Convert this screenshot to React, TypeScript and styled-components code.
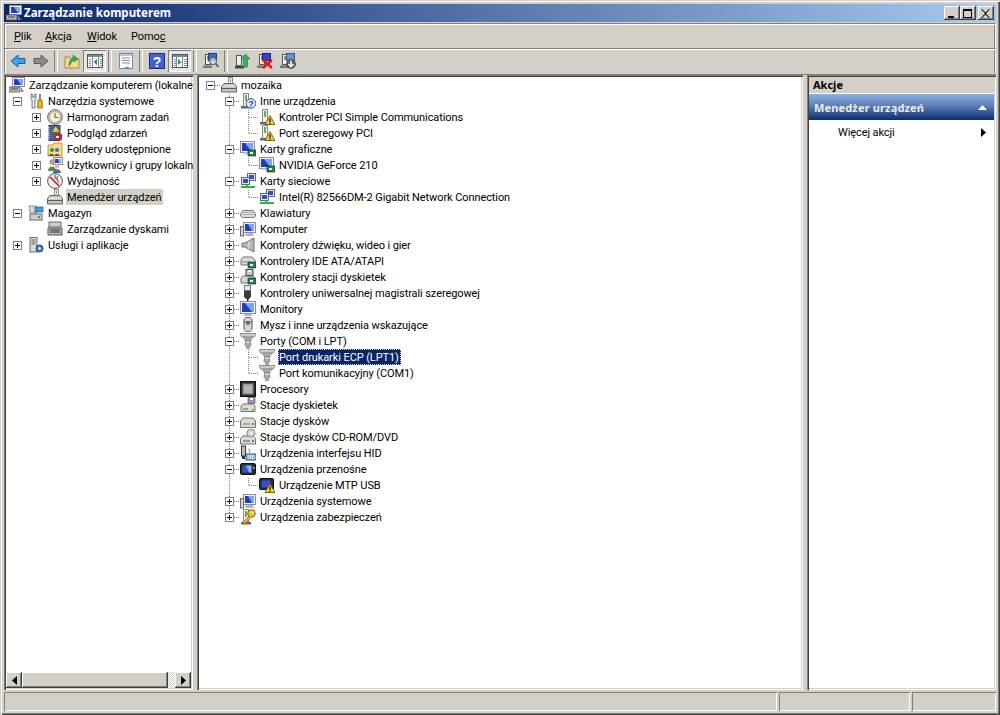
import React from "react";
import styled, { createGlobalStyle } from "styled-components";

const Global = createGlobalStyle`
  html, body { margin: 0; padding: 0; background: #d4d0c8; }
  * { box-sizing: border-box; }
`;

const FONT = `Roboto, "Liberation Sans", sans-serif`;
const BOLD = `"Noto Sans", "Liberation Sans", sans-serif`;
const FACE = "#d4d0c8";
const DITHER = `repeating-conic-gradient(#fff 0 25%, ${FACE} 0 50%) 0 0 / 2px 2px`;

const Window = styled.div`
  width: 1000px; height: 715px; overflow: hidden; background: ${FACE};
  padding: 4px 4px 4px 4px; display: flex; flex-direction: column;
  font: 11px/16px ${FONT}; letter-spacing: -0.09px; color: #000;
  box-shadow: inset 1px 1px 0 ${FACE}, inset 2px 2px 0 #fff, inset -1px -1px 0 #404040, inset -2px -2px 0 #808080;
`;
const TitleBar = styled.div`
  height: 18px; flex: none; display: flex; align-items: center; padding: 0 2px 0 2px;
  background: linear-gradient(to right, #0a246a, #a6caf0);
`;
const TitleText = styled.span`
  flex: 1; margin-left: 2px; color: #fff; font: bold 11.5px/16px ${BOLD}; letter-spacing: 0;
`;
const CaptionButton = styled.div<{ $gap?: number }>`
  width: 16px; height: 14px; margin-left: ${p => p.$gap ?? 0}px; background: ${FACE}; display: flex;
  align-items: center; justify-content: center;
  box-shadow: inset -1px -1px 0 #404040, inset 1px 1px 0 #fff, inset -2px -2px 0 #808080;
`;
const Bar = styled.div`
  height: 25px; flex: none; display: flex; align-items: center; margin-top: 1px;
  border-top: 1px solid #808080; border-left: 1px solid #808080; border-right: 1px solid #fff;
  box-shadow: inset 1px 1px 0 #fff, inset -1px 0 0 #808080;
`;
const MenuBar = styled(Bar)`
  padding-left: 2px; margin-bottom: -1px;
`;
const ToolBar = styled(Bar)`
  padding-left: 1px; margin-bottom: 0;
`;
const MenuItem = styled.span<{ $w: number }>`
  padding: 1px 0 0 7px; white-space: nowrap; width: ${p => p.$w}px;
`;
const ToolButton = styled.div<{ $on?: boolean }>`
  width: 23px; height: 22px; display: flex; align-items: center; justify-content: center; flex: none;
  ${p => p.$on ? `background: ${DITHER}; box-shadow: inset 1px 1px 0 #808080, inset -1px -1px 0 #fff;` : ""}
`;
const ToolSep = styled.div`
  width: 8px; height: 22px; flex: none; display: flex; justify-content: center;
  &::before { content: ""; width: 2px; height: 100%; border-left: 1px solid #808080; border-right: 1px solid #fff; }
`;
const Main = styled.div`
  flex: 1; min-height: 0; display: flex; margin-top: 1px; padding-bottom: 2px;
  border-top: 1px solid #808080;
`;
const Pane = styled.div<{ $w?: number }>`
  ${p => p.$w ? `width: ${p.$w}px; flex: none;` : "flex: 1; min-width: 0;"}
  background: #fff; display: flex; flex-direction: column; overflow: hidden;
  box-shadow: inset 1px 1px 0 #808080, inset 2px 2px 0 #404040, inset -1px -1px 0 #fff, inset -2px -2px 0 ${FACE};
`;
const Splitter = styled.div`
  width: 4px; flex: none;
`;
const Tree = styled.div<{ $left: number }>`
  flex: 1; min-height: 0; padding: 2px 2px 0 ${p => p.$left}px; overflow: hidden;
`;
const Row = styled.div`
  height: 16px; display: flex; align-items: flex-start; white-space: nowrap;
`;
type GuideKind = "none" | "v" | "t" | "l" | "h";
const dotsV = `repeating-linear-gradient(to bottom, #808080 0 1px, transparent 1px 2px)`;
const dotsH = `repeating-linear-gradient(to right, #808080 0 1px, transparent 1px 2px)`;
const guideBg = (k: GuideKind) => {
  switch (k) {
    case "v": return `background: ${dotsV} 8px 1px / 1px 100% no-repeat;`;
    case "t": return `background: ${dotsV} 8px 1px / 1px 100% no-repeat, ${dotsH} 9px 8px / 10px 1px no-repeat;`;
    case "l": return `background: ${dotsV} 8px 1px / 1px 8px no-repeat, ${dotsH} 9px 8px / 10px 1px no-repeat;`;
    case "h": return `background: ${dotsH} 9px 8px / 10px 1px no-repeat;`;
    default: return "";
  }
};
const Guide = styled.div<{ $k: GuideKind }>`
  width: 19px; height: 16px; flex: none; padding: 4px 0 0 4px; ${p => guideBg(p.$k)}
`;
const Expander = styled.div`
  width: 9px; height: 9px; background: #fff; border: 1px solid #808080; display: flex;
  align-items: center; justify-content: center;
`;
const IconSlot = styled.div`
  width: 16px; height: 16px; flex: none;
  & > svg { display: block; }
`;
const Label = styled.span<{ $sel?: "active" | "inactive" }>`
  margin-left: 3px; padding: 0 2px 0 1px; height: 16px; line-height: 18px;
  ${p => p.$sel === "active" ? `background: #0a246a; color: #fff; outline: 1px dotted #d4d0c8; outline-offset: -1px;` : ""}
  ${p => p.$sel === "inactive" ? `background: ${FACE};` : ""}
`;
const HScroll = styled.div`
  height: 16px; flex: none; display: flex; margin: 0 2px 2px 2px;
`;
const ScrollBtn = styled.div`
  width: 16px; height: 16px; flex: none; background: ${FACE}; display: flex; align-items: center; justify-content: center;
  box-shadow: inset -1px -1px 0 #404040, inset 1px 1px 0 #fff, inset -2px -2px 0 #808080;
`;
const ScrollThumb = styled(ScrollBtn)` width: 146px; `;
const ScrollTrack = styled.div` flex: 1; background: ${DITHER}; `;
const ActionsHead = styled.div`
  height: 16px; margin: 2px 2px 0 2px; padding: 0 0 0 4px; background: ${FACE}; font: bold 11px/16px ${BOLD}; letter-spacing: 0;
`;
const ActionsGroup = styled.div`
  height: 26px; margin: 1px 2px 0 2px; padding: 1px 7px 0 5px; display: flex; align-items: center;
  justify-content: space-between; color: #e8eef8; font: bold 11px/16px ${BOLD}; letter-spacing: 0.15px;
  background: linear-gradient(to bottom, #8bb0e2, #5f7eb4 45%, #0c2a74);
`;
const ActionItem = styled.div`
  height: 16px; margin: 4px 2px 0 2px; padding: 1px 8px 0 29px; display: flex; align-items: center; justify-content: space-between;
`;
const StatusBar = styled.div`
  height: 19px; flex: none; display: flex; gap: 2px;
`;
const StatusCell = styled.div<{ $w?: number }>`
  ${p => p.$w ? `width: ${p.$w}px; flex: none;` : "flex: 1;"}
  box-shadow: inset 1px 1px 0 #808080, inset -1px -1px 0 #fff;
`;

/* ---------- icons ---------- */
const S: React.FC<{ c: React.ReactNode }> = ({ c }) => <svg width="16" height="16" viewBox="0 0 16 16">{c}</svg>;
const tower = (
  <g>
    <rect x="3.5" y="0.5" width="5" height="13" fill="#f0f0e8" stroke="#8c8c84" />
    <rect x="5" y="2" width="2" height="6" fill="#6aa56a" />
    <path d="M1 13h10v2.5H1z" fill="#6b6b64" />
  </g>
);
const warn = (
  <g>
    <path d="M11 6.5 16 15.5H6z" fill="#ffd21e" stroke="#5c4a00" strokeWidth="0.8" />
    <rect x="10.4" y="9.5" width="1.2" height="3.4" fill="#000" /><rect x="10.4" y="13.6" width="1.2" height="1.2" fill="#000" />
  </g>
);
const mon = (x = 1, y = 1, w = 12, h = 9) => (
  <g>
    <rect x={x + .5} y={y + .5} width={w} height={h} fill="#eef0f2" stroke="#8a8f96" />
    <rect x={x + 2} y={y + 2} width={w - 3} height={h - 3} fill="#1c3fc4" />
    <path d={`M${x + 5} ${y + 2}h${w - 6}v${h - 3}h-2z`} fill="#7ea6ee" />
  </g>
);
const card = <g><rect x="8" y="9" width="8" height="6" fill="#2f7d4f" stroke="#123" strokeWidth=".6" /><rect x="10" y="11" width="3" height="2" fill="#cfe" /></g>;
const goblet = (
  <g>
    <path d="M0 0.5h16l-1.5 3.5h-13z" fill="#c9cdcd" stroke="#7a7f7f" strokeWidth=".8" />
    <path d="M3 4h10l-2.5 4h-5z" fill="#a5abab" stroke="#7a7f7f" strokeWidth=".6" />
    <rect x="5.5" y="8" width="5" height="3" fill="#dcdede" stroke="#777" strokeWidth=".7" />
    <rect x="5" y="11" width="6" height="2" fill="#b5b9b9" stroke="#777" strokeWidth=".5" />
    <rect x="6" y="13" width="4" height="3" fill="#a0a4a4" />
  </g>
);
const smMon = (x: number, y: number) => (
  <g><rect x={x + .5} y={y + .5} width="8" height="7" fill="#dfe4ea" stroke="#5b6a88" /><rect x={x + 2} y={y + 2} width="5" height="4" fill="#2a50cc" /></g>
);
const Icons: Record<string, React.ReactNode> = {
  mgmt: <g>{mon(3, 0, 12, 9)}<path d="M0 10h11v5H0z" fill="#b8b8b0" stroke="#555" strokeWidth=".8" /><path d="M2 12h7" stroke="#444" /><path d="M12 10l3 5h-3z" fill="#889" /></g>,
  tools: <g><path d="M3 1v5l1 1v8h3V7l1-1V1L6.7 1v3H4.3V1z" fill="#e4e4e0" stroke="#666" strokeWidth=".8" /><rect x="11" y="1" width="2" height="6" fill="#8a8a8a" /><path d="M10 7h4l.5 8h-5z" fill="#f2b518" stroke="#8a6400" strokeWidth=".8" /></g>,
  clock: <g><circle cx="8" cy="8" r="7.4" fill="#c8c4bc" stroke="#77736c" /><circle cx="8" cy="8" r="5.4" fill="#fbf3d8" stroke="#a09c94" strokeWidth=".7" /><path d="M8 4v4.5h3.5" fill="none" stroke="#8a6a20" strokeWidth="1.2" /></g>,
  log: <g><rect x="2" y="0.5" width="11" height="15" fill="#3f63a8" stroke="#223" strokeWidth=".8" /><path d="M2 2v12" stroke="#dde" strokeWidth="1.4" strokeDasharray="1 1" /><path d="M8.5 1 13 7H5z" fill="#ffd21e" stroke="#664" strokeWidth=".6" /><rect x="7" y="9" width="8" height="6" fill="#c0262c" /><rect x="9" y="11" width="3" height="2" fill="#fff" /></g>,
  shared: <g><path d="M1 4h5l1-2h8v13H1z" fill="#f4d97e" stroke="#a98a35" strokeWidth=".8" /><circle cx="5" cy="9" r="2" fill="#3c8f3c" /><circle cx="10" cy="9" r="2" fill="#3d6bc0" /><path d="M2 15c0-3 5-3 5 0zM7.5 15c0-3 5-3 5 0z" fill="#555" /></g>,
  users: <g>{mon(6, 0, 9, 7)}<circle cx="5" cy="5" r="2.3" fill="#d7a96a" stroke="#725" strokeWidth=".4" /><path d="M1 14c0-6 8-6 8 0z" fill="#5a8a45" /><circle cx="10" cy="9.5" r="2.2" fill="#e6bf8a" /><path d="M6 16c0-5 8-5 8 0z" fill="#4a68a8" /></g>,
  perf: <g><circle cx="8" cy="8" r="7.4" fill="#f3f1ea" stroke="#555" /><path d="M3 4 12 13" stroke="#c42020" strokeWidth="1.6" /><path d="M8 2v4M11 3l-2 3" stroke="#446" /><path d="M9 5l3 7-1-6z" fill="#c42020" /></g>,
  dev: <g><rect x="7.5" y="0.5" width="4" height="7" fill="#f0f0e8" stroke="#8c8c84" /><rect x="9" y="2" width="1" height="3" fill="#6aa56a" /><path d="M0.5 9.5 3 6.5h10l2.5 3v5.5H.5z" fill="#c6c6c0" stroke="#66665f" /><rect x="1" y="11" width="14" height="1" fill="#5d5d56" /><rect x="2" y="8.5" width="12" height="1" fill="#f4f4f0" /></g>,
  storage: <g><rect x="2" y="9" width="12" height="6" fill="#cfcfc8" stroke="#6a6a64" /><rect x="10" y="11" width="2" height="2" fill="#3aa03a" /><path d="M1 1h7l1 7H2z" fill="#d8dcd8" stroke="#777" strokeWidth=".7" /><rect x="7" y="2" width="8" height="5" fill="#3aa0e0" stroke="#1f5f98" strokeWidth=".7" /></g>,
  diskm: <g><path d="M2 1h12v5H2z" fill="#cfcfc9" stroke="#666" /><path d="M1 7h14v7H1z" fill="#b8b8b2" stroke="#555" /><path d="M3 9h10M3 11h10" stroke="#333" /></g>,
  svc: <g><rect x="2" y="0.5" width="7" height="14.5" fill="#d6dae0" stroke="#6a7078" /><path d="M3.5 3h4M3.5 5h4M3.5 7h4" stroke="#666" /><circle cx="11.5" cy="11.5" r="3.5" fill="#4a7cc0" stroke="#204878" /><circle cx="11.5" cy="11.5" r="1.2" fill="#fff" /></g>,
  other: <g>{tower}<circle cx="11" cy="10.5" r="4.8" fill="#e4ecf8" stroke="#3058a8" /><text x="11" y="14" fontSize="9" fontWeight="bold" textAnchor="middle" fill="#2040a0" fontFamily="Liberation Sans">?</text></g>,
  warnDev: <g>{tower}{warn}</g>,
  display: <g>{mon(0, 0, 14, 11)}<path d="M3 11.5h7v2H3z" fill="#d4d4d0" />{card}</g>,
  net: <g>{smMon(7, 0)}{smMon(1, 4)}<path d="M1 13h14v2H1z" fill="#35b035" /><path d="M7 11v2" stroke="#35b035" strokeWidth="2" /></g>,
  keyboard: <g><path d="M0.5 9 3 5.5h10L15.5 9v2l-1.5 1.5H2L.5 11z" fill="#d9dbe0" stroke="#77797f" /><path d="M3 7.5h10M2.5 9.5h11" stroke="#8a8c92" strokeDasharray="1 1" /></g>,
  computer: <g>{mon(3, 1, 12, 10)}<rect x="0.5" y="5.5" width="3" height="9.5" fill="#d8d8d2" stroke="#666" /><path d="M6 12h7l1 3H5z" fill="#b8b8b2" /></g>,
  sound: <g><path d="M2 6h3l9-5v14l-9-5H2z" fill="#b6b8b4" stroke="#6c6e6a" /><path d="M9 4v8" stroke="#e8e8e4" /></g>,
  ide: <g><path d="M1 7 3 4h9l3 3v5H1z" fill="#dcdcd6" stroke="#74746e" /><path d="M2 9h8" stroke="#888" />{card}</g>,
  floppyC: <g><path d="M1 9 3 7h9l3 2v5H1z" fill="#d8d8d2" stroke="#6e6e68" /><rect x="6" y="0.5" width="7" height="6" fill="#c8c8c2" stroke="#444" /><rect x="8" y="1" width="3" height="2" fill="#fff" />{card}</g>,
  usb: <g><rect x="4.5" y="0.5" width="6" height="5" fill="#e8e8e4" stroke="#777" /><path d="M4 6h7v6l-2 2H6l-2-2z" fill="#3c3c40" /><rect x="7" y="14" width="1.5" height="2" fill="#222" /></g>,
  monitor: <g>{mon(0, 0, 15, 12)}<path d="M5 13h6l1 2H4z" fill="#b8b8b2" /></g>,
  mouse: <g><path d="M4 3c0-3.4 8-3.4 8 0v8c0 5-8 5-8 0z" fill="#d6d6d0" stroke="#555" /><path d="M4 5h8" stroke="#555" /><circle cx="8" cy="6" r="2" fill="#666" /></g>,
  port: goblet,
  cpu: <g><rect x="0.5" y="0.5" width="15" height="15" fill="#32322e" stroke="#111" /><rect x="3" y="3" width="10" height="10" fill="#b5b5ac" stroke="#777" /></g>,
  floppy: <g><path d="M1 9 3 7h10l2 2v5.5H1z" fill="#dcdcd6" stroke="#74746e" /><path d="M3 12h5" stroke="#555" /><rect x="12" y="12" width="1.5" height="1.5" fill="#3a3" /><rect x="8" y="0.5" width="7" height="6" fill="#b080d8" stroke="#543" strokeWidth=".6" /><rect x="10" y="1" width="3" height="2" fill="#fff" /></g>,
  disk: <g><path d="M0.5 8 3 5h10l2.5 3v6.5H.5z" fill="#dcdcd6" stroke="#74746e" /><path d="M3 11h7" stroke="#777" /><rect x="12" y="10" width="2" height="2" fill="#3a3" /></g>,
  cd: <g><path d="M0.5 9.5 3 7h10l2.5 2.5v5.5H.5z" fill="#dcdcd6" stroke="#74746e" /><path d="M3 12h7" stroke="#555" /><rect x="12" y="11" width="2" height="2" fill="#3a3" /><circle cx="11" cy="4" r="4" fill="#d0d8e0" stroke="#888" /><circle cx="11" cy="4" r="1" fill="#fff" /></g>,
  hid: <g><rect x="1.5" y="1" width="4" height="10" fill="#bfc2c6" stroke="#333" /><path d="M2 11h3v3H2z" fill="#333" /><rect x="6" y="9" width="10" height="6" fill="#9cc0e4" stroke="#456" /><path d="M8 11h6M8 13h6" stroke="#fff" strokeDasharray="1 1" /><path d="M8 4l2 1-1 3" fill="none" stroke="#889" /></g>,
  portable: <g><rect x="0.5" y="2.5" width="15" height="11" rx="1.5" fill="#2c2c30" stroke="#111" /><rect x="2.5" y="4.5" width="9" height="7" fill="#2e52d6" /><path d="M6 4.5h5.5v7H9z" fill="#8cb0f0" /><rect x="13" y="6" width="1.5" height="1.5" fill="#ddd" /></g>,
  mtp: <g><rect x="0.5" y="1.5" width="14" height="11" rx="1.5" fill="#2c2c30" stroke="#111" /><rect x="2.5" y="3.5" width="9" height="7" fill="#2e52d6" />{warn}</g>,
  system: <g>{mon(3, 1, 12, 10)}<rect x="0.5" y="5.5" width="3" height="9.5" fill="#d8d8d2" stroke="#666" /><path d="M6 12h7l1 3H5z" fill="#b8b8b2" /></g>,
  key: <g>{tower}<circle cx="11.5" cy="4.5" r="3.8" fill="#f0c030" stroke="#8a6400" /><circle cx="12.5" cy="3.5" r="1" fill="#fff" /><path d="M9 7 3 14l1 1.5 1.5-1 1-1.5 1 0 3-4.5" fill="#e8b020" stroke="#8a6400" strokeWidth=".7" /></g>,
};

const towerSmall = (<g><rect x="2.5" y="1.5" width="5" height="10" fill="#f0f0e8" stroke="#555" /><rect x="4" y="3" width="2" height="4" fill="#6aa56a" /><path d="M0 12.5h9v2.5H0z" fill="#777" /></g>);
const T: Record<string, React.ReactNode> = {
  back: <path d="M1 8 8 2v3.5h7v5H8V14z" fill="#3aa4ec" stroke="#1460a8" />,
  fwd: <path d="M15 8 8 2v3.5H1v5h7V14z" fill="#8c8c88" stroke="#5c5c58" />,
  up: <g><path d="M1 4h5l1 2h8v9H1z" fill="#f4d98a" stroke="#a88a40" /><path d="M5 13c0-5 2-7 4-8V2l5 4-4 3V7c-2 1-3 3-5 6z" fill="#2fae4e" stroke="#147a30" strokeWidth=".5" /></g>,
  tree: <g><rect x=".5" y="1.5" width="15" height="13" fill="#fff" stroke="#4b5a68" /><rect x="1" y="2" width="14" height="2" fill="#7d8b99" /><path d="M5.5 4v10M11.5 4v10" stroke="#7d8b99" /><path d="M2 6.5h2M2 8.5h2M2 10.5h2M2 12.5h2M13 6.5h2M13 8.5h2M13 10.5h2M13 12.5h2" stroke="#7d8b99" /><path d="M6.5 9 10 6v6z" fill="#1f9a4a" /></g>,
  props: <g><rect x="1.5" y="0.5" width="13" height="15" fill="#fff" stroke="#7d8b99" /><rect x="2" y="1" width="12" height="2" fill="#bcc6d0" /><path d="M4 5h8M4 7.5h8M4 10h8" stroke="#7d8b99" /><rect x="7" y="14" width="4" height="2" fill="#2ba0e0" /></g>,
  help: <g><rect x=".5" y=".5" width="15" height="15" fill="#3f62cc" stroke="#1e2f80" /><text x="8" y="13.5" fontFamily="Liberation Sans" fontWeight="bold" fontSize="14" fill="#fff" textAnchor="middle">?</text></g>,
  action: <g><rect x=".5" y="1.5" width="15" height="13" fill="#fff" stroke="#4b5a68" /><rect x="1" y="2" width="14" height="2" fill="#7d8b99" /><path d="M4.5 4v10M10.5 4v10" stroke="#7d8b99" /><path d="M2 6.5h2M2 8.5h2M2 10.5h2M2 12.5h2M12 6.5h3M12 8.5h3M12 10.5h3M12 12.5h3" stroke="#7d8b99" /><path d="M9.5 9 6 6v6z" fill="#1f9a4a" /></g>,
  scan: <g>{towerSmall}<rect x="5.5" y="0.5" width="8" height="7" fill="#3f6fc8" stroke="#1e3f88" /><circle cx="10" cy="8" r="3.6" fill="#cfe2f8" fillOpacity=".7" stroke="#4a5a6a" /><path d="M12.5 10.5l3 3.5" stroke="#555" strokeWidth="1.6" /></g>,
  update: <g><rect x="2.5" y="2.5" width="5" height="10" fill="#f0f0e8" stroke="#555" /><path d="M1 13h9v2.5H1z" fill="#444" /><path d="M11.5 1 16 6h-2.5v8h-4V6H7z" fill="#34b060" stroke="#147a30" strokeWidth=".6" /></g>,
  remove: <g>{towerSmall}<rect x="5.5" y="0.5" width="8" height="7" fill="#3f3fc8" stroke="#1e1e88" /><path d="M6 7l9 8M15 7l-9 8" stroke="#e01818" strokeWidth="2.4" /></g>,
  scan2: <g>{towerSmall}<rect x="6.5" y="0.5" width="8" height="7" fill="#6e8fd0" stroke="#3a5590" /><circle cx="11" cy="11" r="4.4" fill="#666" stroke="#444" /><path d="M11 7.5v5M8.5 11l2.5 2.8 2.5-2.8" fill="none" stroke="#fff" strokeWidth="1.4" /></g>,
};

const Plus = <svg width="7" height="7" viewBox="0 0 7 7"><path d="M1 3h5v1H1zM3 1h1v5H3z" fill="#000" /></svg>;
const Minus = <svg width="7" height="7" viewBox="0 0 7 7"><path d="M1 3h5v1H1z" fill="#000" /></svg>;

type Node = { g: GuideKind[]; x?: "+" | "-"; i: string; t: string; sel?: "active" | "inactive" };

const left: Node[] = [
  { g: [], i: "mgmt", t: "Zarządzanie komputerem (lokalne)" },
  { g: ["none"], x: "-", i: "tools", t: "Narzędzia systemowe" },
  { g: ["none", "none"], x: "+", i: "clock", t: "Harmonogram zadań" },
  { g: ["none", "none"], x: "+", i: "log", t: "Podgląd zdarzeń" },
  { g: ["none", "none"], x: "+", i: "shared", t: "Foldery udostępnione" },
  { g: ["none", "none"], x: "+", i: "users", t: "Użytkownicy i grupy lokalne" },
  { g: ["none", "none"], x: "+", i: "perf", t: "Wydajność" },
  { g: ["none", "none"], i: "dev", t: "Menedżer urządzeń", sel: "inactive" },
  { g: ["none"], x: "-", i: "storage", t: "Magazyn" },
  { g: ["none", "none"], i: "diskm", t: "Zarządzanie dyskami" },
  { g: ["none"], x: "+", i: "svc", t: "Usługi i aplikacje" },
];

const cat = (x: "+" | "-", i: string, t: string, last = false): Node => ({ g: ["none", last ? "l" : "t"], x, i, t });
const kid = (i: string, t: string, last: boolean, sel?: "active"): Node => ({ g: ["none", "v", last ? "l" : "t"], i, t, sel });

const center: Node[] = [
  { g: ["h"], x: "-", i: "dev", t: "mozaika" },
  cat("-", "other", "Inne urządzenia"),
  kid("warnDev", "Kontroler PCI Simple Communications", false),
  kid("warnDev", "Port szeregowy PCI", true),
  cat("-", "display", "Karty graficzne"),
  kid("display", "NVIDIA GeForce 210", true),
  cat("-", "net", "Karty sieciowe"),
  kid("net", "Intel(R) 82566DM-2 Gigabit Network Connection", true),
  cat("+", "keyboard", "Klawiatury"),
  cat("+", "computer", "Komputer"),
  cat("+", "sound", "Kontrolery dźwięku, wideo i gier"),
  cat("+", "ide", "Kontrolery IDE ATA/ATAPI"),
  cat("+", "floppyC", "Kontrolery stacji dyskietek"),
  cat("+", "usb", "Kontrolery uniwersalnej magistrali szeregowej"),
  cat("+", "monitor", "Monitory"),
  cat("+", "mouse", "Mysz i inne urządzenia wskazujące"),
  cat("-", "port", "Porty (COM i LPT)"),
  kid("port", "Port drukarki ECP (LPT1)", false, "active"),
  kid("port", "Port komunikacyjny (COM1)", true),
  cat("+", "cpu", "Procesory"),
  cat("+", "floppy", "Stacje dyskietek"),
  cat("+", "disk", "Stacje dysków"),
  cat("+", "cd", "Stacje dysków CD-ROM/DVD"),
  cat("+", "hid", "Urządzenia interfejsu HID"),
  cat("-", "portable", "Urządzenia przenośne"),
  kid("mtp", "Urządzenie MTP USB", true),
  cat("+", "system", "Urządzenia systemowe"),
  cat("+", "key", "Urządzenia zabezpieczeń", true),
];

const TreeRows: React.FC<{ nodes: Node[] }> = ({ nodes }) => (
  <>
    {nodes.map((n, idx) => (
      <Row key={idx}>
        {n.g.map((k, j) => {
          const isLast = j === n.g.length - 1;
          return (
            <Guide key={j} $k={k}>
              {isLast && n.x && <Expander>{n.x === "+" ? Plus : Minus}</Expander>}
            </Guide>
          );
        })}
        <IconSlot><S c={Icons[n.i]} /></IconSlot>
        <Label $sel={n.sel}>{n.t}</Label>
      </Row>
    ))}
  </>
);

const Arrow: React.FC<{ d: "l" | "r" }> = ({ d }) => (
  <svg width="5" height="9" viewBox="0 0 5 9"><path d={d === "l" ? "M5 0v9L0 4.5z" : "M0 0v9l5-4.5z"} fill="#000" /></svg>
);

export default function App() {
  const tools: (string | null | [string])[] = ["back", "fwd", null, "up", ["tree"], null, "props", null, "help", ["action"], null, "scan", null, "update", "remove", "scan2"];
  return (
    <>
      <Global />
      <Window>
        <TitleBar>
          <S c={Icons.mgmt} />
          <TitleText>Zarządzanie komputerem</TitleText>
          <CaptionButton><svg width="10" height="9" viewBox="0 0 10 9"><path d="M1 7h6v2H1z" /></svg></CaptionButton>
          <CaptionButton><svg width="10" height="9" viewBox="0 0 10 9"><path d="M0 0h9v9H0zM1 2v6h7V2z" fillRule="evenodd" /></svg></CaptionButton>
          <CaptionButton $gap={2}><svg width="10" height="9" viewBox="0 0 10 9"><path d="M1 0l3.5 3.5L8 0l1 0-4 4.5L9 9H8L4.5 5.5 1 9H0l4-4.5L0 0z" /></svg></CaptionButton>
        </TitleBar>
        <MenuBar>
          <MenuItem $w={31}><u>P</u>lik</MenuItem>
          <MenuItem $w={42}><u>A</u>kcja</MenuItem>
          <MenuItem $w={44}><u>W</u>idok</MenuItem>
          <MenuItem $w={50}>Pomo<u>c</u></MenuItem>
        </MenuBar>
        <ToolBar>
          {tools.map((t, i) => t === null ? <ToolSep key={i} /> : Array.isArray(t)
            ? <ToolButton key={i} $on><S c={T[t[0]]} /></ToolButton>
            : <ToolButton key={i}><S c={T[t]} /></ToolButton>)}
        </ToolBar>
        <Main>
          <Pane $w={189}>
            <Tree $left={5}><TreeRows nodes={left} /></Tree>
            <HScroll>
              <ScrollBtn><Arrow d="l" /></ScrollBtn>
              <ScrollThumb />
              <ScrollTrack />
              <ScrollBtn><Arrow d="r" /></ScrollBtn>
            </HScroll>
          </Pane>
          <Splitter />
          <Pane>
            <Tree $left={5}><TreeRows nodes={center} /></Tree>
          </Pane>
          <Splitter />
          <Pane $w={189}>
            <ActionsHead>Akcje</ActionsHead>
            <ActionsGroup>
              <span>Menedżer urządzeń</span>
              <svg width="9" height="5" viewBox="0 0 9 5"><path d="M4.5 0 9 5H0z" fill="#fff" /></svg>
            </ActionsGroup>
            <ActionItem>
              <span>Więcej akcji</span>
              <Arrow d="r" />
            </ActionItem>
          </Pane>
        </Main>
        <StatusBar>
          <StatusCell />
          <StatusCell $w={131} />
          <StatusCell $w={84} />
        </StatusBar>
      </Window>
    </>
  );
}
